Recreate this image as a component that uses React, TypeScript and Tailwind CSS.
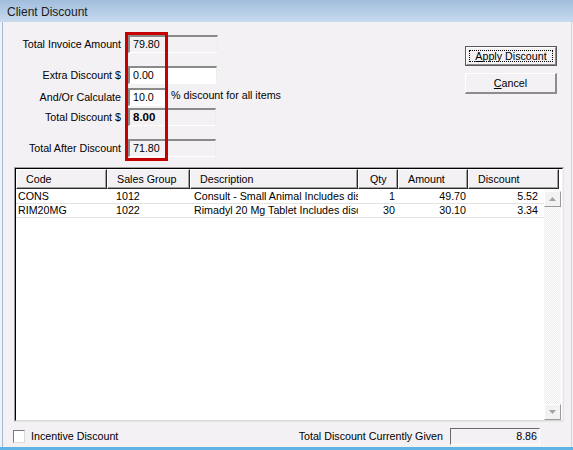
import React from 'react';

function Box({ cls, children }: { cls: string; children?: React.ReactNode }) {
  return (
    <div
      className={`h-[18px] flex items-center border-t-2 border-l-2 border-t-[#8a8a8a] border-l-[#8a8a8a] border-b border-r border-b-white border-r-[#ececec] pl-[3px] leading-none ${cls}`}
    >
      {children}
    </div>
  );
}

function Label({ children }: { children: React.ReactNode }) {
  return <div className="w-[118px] text-right leading-none">{children}</div>;
}

function HeadCell({ cls, children }: { cls: string; children: React.ReactNode }) {
  return (
    <div
      className={`h-[20px] flex items-center border-t border-l border-t-white border-l-white border-r border-b border-r-[#2a2a2a] border-b-[#2a2a2a] shadow-[inset_-1px_-1px_0_#a0a0a0] leading-none ${cls}`}
    >
      {children}
    </div>
  );
}

function ScrollBtn({ up }: { up?: boolean }) {
  return (
    <div className="h-[16px] w-[17px] bg-[#f2f2f2] border-t border-l border-t-white border-l-white border-r border-b border-r-[#9a9a9a] border-b-[#9a9a9a] flex items-center justify-center">
      <svg width="7" height="4" viewBox="0 0 7 4">
        {up ? <path d="M3.5 0 L7 4 L0 4 Z" fill="#a3a3a3" /> : <path d="M0 0 L7 0 L3.5 4 Z" fill="#a3a3a3" />}
      </svg>
    </div>
  );
}

const rows = [
  { code: 'CONS', sg: '1012', desc: 'Consult - Small Animal Includes discount', qty: '1', amt: '49.70', disc: '5.52' },
  { code: 'RIM20MG', sg: '1022', desc: 'Rimadyl 20 Mg Tablet Includes discount', qty: '30', amt: '30.10', disc: '3.34' },
];

export default function App() {
  return (
    <div className="w-[573px] h-[450px] overflow-hidden bg-[#f4f1f5] flex flex-col font-['Liberation_Sans',Arial,sans-serif] text-[10.7px] text-black">
      {/* title bar */}
      <div className="h-[22px] shrink-0 bg-gradient-to-b from-[#a1bddc] to-[#c8dbef] flex items-center pl-[7px] pt-[1px] text-[12px] text-[#1b1b1b]">
        Client Discount
      </div>

      {/* body */}
      <div className="flex-1 flex flex-col ml-[2px] mr-[1px] border-l border-r border-l-[#9fbad8] border-r-[#c5d8ec] relative">
        {/* top section */}
        <div className="h-[145px] shrink-0 flex justify-between relative">
          <div className="flex flex-col pt-[13px]">
            <div className="flex items-center">
              <Label>Total Invoice Amount</Label>
              <div className="ml-[7px]">
                <Box cls="w-[90px] bg-[#f4f1f5]">79.80</Box>
              </div>
            </div>
            <div className="flex items-center mt-[13px]">
              <Label>Extra Discount $</Label>
              <div className="ml-[7px]">
                <Box cls="w-[89px] bg-white">0.00</Box>
              </div>
            </div>
            <div className="flex items-center mt-[4px]">
              <Label>And/Or Calculate</Label>
              <div className="ml-[7px]">
                <Box cls="w-[38px] bg-white">10.0</Box>
              </div>
              <div className="ml-[5px] leading-none -mt-[3px]">% discount for all items</div>
            </div>
            <div className="flex items-center mt-[2px]">
              <Label>Total Discount $</Label>
              <div className="ml-[7px]">
                <Box cls="w-[88px] bg-[#f4f1f5] font-bold text-[11.5px]">8.00</Box>
              </div>
            </div>
            <div className="flex items-center mt-[13px]">
              <Label>Total After Discount</Label>
              <div className="ml-[7px]">
                <Box cls="w-[88px] bg-[#f4f1f5]">71.80</Box>
              </div>
            </div>
          </div>

          {/* buttons */}
          <div className="flex flex-col pt-[24px] pr-[14px] gap-[7px]">
            <div className="w-[92px] h-[20px] border border-[#5a5a5a] flex">
              <div className="flex-1 border-t border-l border-t-white border-l-white border-r border-b border-r-[#8a8a8a] border-b-[#8a8a8a] bg-[#f4f1f5] p-[2px] flex">
                <div className="flex-1 border border-dotted border-black flex items-center justify-center leading-none">
                  <span>
                    <span className="underline">A</span>pply Discount
                  </span>
                </div>
              </div>
            </div>
            <div className="w-[92px] h-[21px] border-t border-l border-t-white border-l-white border-r-2 border-b-2 border-r-[#8c8c8c] border-b-[#8c8c8c] bg-[#f4f1f5] flex items-center justify-center leading-none">
              <span>
                <span className="underline">C</span>ancel
              </span>
            </div>
          </div>

          {/* red annotation box */}
          <div className="absolute left-[122px] top-[10px] w-[43px] h-[129px] border-[3px] border-[#c40000] pointer-events-none" />
        </div>

        {/* grid */}
        <div className="h-[255px] shrink-0 ml-[11px] mr-[7px] border-t border-l border-t-[#a0a0a0] border-l-[#a0a0a0] border-b border-r border-b-[#e6e6e6] border-r-[#e6e6e6] flex">
          <div className="flex-1 flex flex-col border-t border-l border-t-black border-l-black border-b border-r border-b-[#d8d8d8] border-r-[#f4f1f5] bg-white">
            {/* header */}
            <div className="flex bg-[#f4f1f5] shrink-0">
              <HeadCell cls="w-[91px] pl-[9px]">Code</HeadCell>
              <HeadCell cls="w-[83px] pl-[9px]">Sales Group</HeadCell>
              <HeadCell cls="w-[168px] pl-[9px]">Description</HeadCell>
              <HeadCell cls="w-[40px] pl-[11px]">Qty</HeadCell>
              <HeadCell cls="w-[70px] pl-[9px]">Amount</HeadCell>
              <HeadCell cls="w-[91px] pl-[9px]">Discount</HeadCell>
              <div className="flex-1 bg-white" />
            </div>
            {/* body */}
            <div className="flex-1 flex pt-[1px]">
              <div className="w-[528px] flex flex-col">
                {rows.map((r) => (
                  <div key={r.code} className="h-[14px] flex items-center border-b border-b-[#e3e3e3] leading-none whitespace-nowrap">
                    <div className="w-[91px] pl-[2px]">{r.code}</div>
                    <div className="w-[83px] pl-[9px]">{r.sg}</div>
                    <div className="w-[168px] pl-[4px] overflow-hidden">{r.desc}</div>
                    <div className="w-[40px] text-right pr-[3px]">{r.qty}</div>
                    <div className="w-[70px] text-right pr-[2px]">{r.amt}</div>
                    <div className="w-[76px] text-right pr-[6px]">{r.disc}</div>
                  </div>
                ))}
              </div>
              <div className="w-[17px] flex flex-col pt-[1px] bg-[repeating-conic-gradient(#ececec_0_25%,#ffffff_0_50%)] bg-[length:2px_2px]">
                <ScrollBtn up />
                <div className="flex-1" />
                <ScrollBtn />
              </div>
            </div>
          </div>
        </div>

        {/* bottom bar */}
        <div className="flex-1 flex items-center justify-between pl-[10px] pr-[31px] pt-[4px]">
          <div className="flex items-center">
            <div className="w-[12px] h-[13px] bg-white border-t border-l border-t-[#7a7a7a] border-l-[#7a7a7a] border-b border-r border-b-[#dcdcdc] border-r-[#dcdcdc]" />
            <div className="ml-[6px] leading-none">Incentive Discount</div>
          </div>
          <div className="flex items-center">
            <div className="leading-none">Total Discount Currently Given</div>
            <div className="ml-[7px] w-[90px] h-[17px] border-t border-l border-t-[#6a6a6a] border-l-[#6a6a6a] border-b border-r border-b-white border-r-white bg-[#f4f1f5] flex items-center justify-end pr-[2px] leading-none">
              8.86
            </div>
          </div>
        </div>
      </div>

      <div className="h-[3px] shrink-0 bg-[#5fb3e4]" />
    </div>
  );
}
